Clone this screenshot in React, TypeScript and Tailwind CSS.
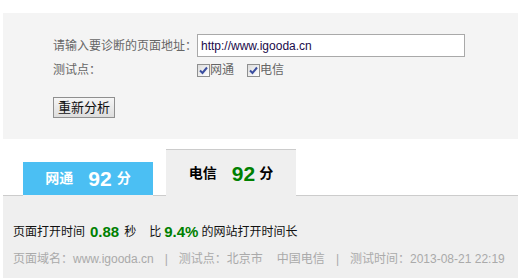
const font = "font-['Liberation_Sans','Noto_Sans_CJK_SC',sans-serif]";

const Check = () => (
  <span className="inline-flex w-[13px] h-[13px] border border-[#8e8f8f] bg-gradient-to-br from-[#dcdcdc] to-white items-center justify-center">
    <svg width="9" height="9" viewBox="0 0 9 9">
      <path d="M1 4.5 L3.5 7 L8 1.5" fill="none" stroke="#3b4fa0" strokeWidth="2" />
    </svg>
  </span>
);

const App = () => {
  return (
    <div className={`w-[518px] h-[278px] bg-white overflow-hidden pt-[13px] pl-[3px] ${font}`}>
      {/* 上部: 输入区 */}
      <div className="h-[126px] bg-[#f4f4f4] pl-[50px] pt-[21px] text-[12px] text-[#666]">
        <div className="flex items-center h-[23px]">
          <div className="w-[144px]">请输入要诊断的页面地址：</div>
          <div className="w-[268px] h-[23px] border border-[#a9a9a9] bg-white flex items-center pl-[3px] text-[12px] text-[#1a0a4a]">
            http://www.igooda.cn
          </div>
        </div>
        <div className="flex items-center h-[16px] mt-[5px]">
          <div className="w-[144px]">测试点：</div>
          <label className="flex items-center">
            <Check />
            <span>网通</span>
          </label>
          <label className="flex items-center ml-[13px]">
            <Check />
            <span>电信</span>
          </label>
        </div>
        <button className="mt-[19px] w-[62px] h-[21px] border border-[#8f8f8f] bg-gradient-to-b from-[#f6f6f6] to-[#dddddd] text-[13px] text-[#111] leading-none">
          重新分析
        </button>
      </div>

      {/* 标签页 */}
      <div className="mt-[10px] h-[47px] flex items-end pl-[20px] border-b border-[#cccccc]">
        <div className="w-[130px] h-[34px] -mb-px bg-[#4bbff3] border-b border-[#efefef] flex items-center justify-center text-white font-bold">
          <span className="text-[14px]">网通</span>
          <span className="text-[21px] ml-[15px]">92</span>
          <span className="text-[14px] ml-[5px]">分</span>
        </div>
        <div className="w-[130px] h-[47px] -mb-px ml-[13px] bg-[#efefef] border-t border-[#cccccc] flex items-center justify-center text-black font-bold pt-[1px]">
          <span className="text-[14px]">电信</span>
          <span className="text-[21px] ml-[15px] text-[#008000]">92</span>
          <span className="text-[14px] ml-[4px]">分</span>
        </div>
      </div>

      {/* 结果 */}
      <div className="h-[82px] bg-[#efefef] pl-[10px] pt-[26px]">
        <div className="flex items-center h-[20px] text-[12px] text-[#111]">
          <span>页面打开时间</span>
          <span className="text-[15px] font-bold text-[#008000] mx-[5px]">0.88</span>
          <span>秒</span>
          <span className="ml-[13px]">比</span>
          <span className="text-[15px] font-bold text-[#008000] mx-[3px]">9.4%</span>
          <span>的网站打开时间长</span>
        </div>
        <div className="flex items-center h-[16px] mt-[9px] text-[12px] text-[#aaaaaa] whitespace-nowrap">
          <span>页面域名：www.igooda.cn</span>
          <span className="mx-[11px]">|</span>
          <span>测试点：北京市</span>
          <span className="ml-[14px]">中国电信</span>
          <span className="mx-[11px]">|</span>
          <span>测试时间：2013-08-21 22:19</span>
        </div>
      </div>
    </div>
  );
};

export default App;
